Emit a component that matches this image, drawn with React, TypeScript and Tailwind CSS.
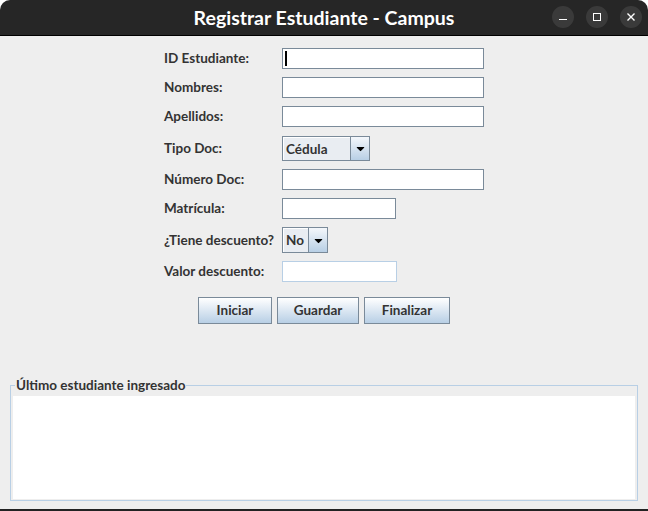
import { FaCaretDown } from "react-icons/fa";

const label = "w-[118px] shrink-0 text-[13.5px] font-bold text-[#333333]";
const field = "h-[21px] border border-[#7a8a99] bg-white";

function Row({ text, h = "h-[21px]", children }: { text: string; h?: string; children: React.ReactNode }) {
  return (
    <div className={`flex items-center ${h}`}>
      <div className={label}>{text}</div>
      {children}
    </div>
  );
}

function Combo({ value, w, textW }: { value: string; w: string; textW: string }) {
  return (
    <div className={`flex h-full ${w} border border-[#7a8a99] bg-[#e9edf2]`}>
      <div className={`${textW} flex items-center border-t border-l border-white pl-[2px] text-[13.5px] font-bold text-[#333333]`}>
        {value}
      </div>
      <div className="flex flex-1 items-center justify-center border-l border-[#7a8a99] bg-gradient-to-b from-[#f4f7fb] to-[#b8cfe5]">
        <FaCaretDown className="text-[13px] text-black" />
      </div>
    </div>
  );
}

function WinButton({ children }: { children: React.ReactNode }) {
  return (
    <div className="flex h-[22px] w-[22px] items-center justify-center rounded-full bg-[#3a3a3a]">{children}</div>
  );
}

function Button({ text, w }: { text: string; w: string }) {
  return (
    <button className={`${w} h-[27px] border border-[#7a8a99] bg-gradient-to-b from-white to-[#b8cfe5] text-[13.5px] font-bold text-[#333333]`}>
      {text}
    </button>
  );
}

export default function App() {
  return (
    <div className="flex h-[511px] w-[648px] flex-col overflow-hidden rounded-t-[10px] bg-[#eeeeee] font-['Lato',sans-serif]">
      <div className="relative flex h-[36px] shrink-0 items-center justify-center border-b border-black bg-[#262626]">
        <div className="text-[19.5px] font-bold text-white">Registrar Estudiante - Campus</div>
        <div className="absolute right-[6px] top-[6px] flex gap-[12px]">
          <WinButton>
            <div className="mt-[5px] h-[1.5px] w-[8px] bg-white" />
          </WinButton>
          <WinButton>
            <div className="h-[8px] w-[8px] border border-white" />
          </WinButton>
          <WinButton>
            <svg width="10" height="10" viewBox="0 0 10 10" stroke="white" strokeWidth="1.4">
              <path d="M1.5 1.5 L8.5 8.5 M8.5 1.5 L1.5 8.5" />
            </svg>
          </WinButton>
        </div>
      </div>

      <div className="flex flex-1 flex-col border-b-2 border-[#222222]">
        <div className="mx-auto mt-[12px] flex w-[320px] flex-col">
          <Row text="ID Estudiante:">
            <div className={`${field} w-[202px] pl-[2px] pt-[2px]`}>
              <div className="h-[15px] w-[2px] bg-black" />
            </div>
          </Row>
          <div className="mt-[8px]">
            <Row text="Nombres:">
              <div className={`${field} w-[202px]`} />
            </Row>
          </div>
          <div className="mt-[8px]">
            <Row text="Apellidos:">
              <div className={`${field} w-[202px]`} />
            </Row>
          </div>
          <div className="mt-[9px]">
            <Row text="Tipo Doc:" h="h-[25px]">
              <Combo value="Cédula" w="w-[88px]" textW="w-[67px]" />
            </Row>
          </div>
          <div className="mt-[8px]">
            <Row text="Número Doc:">
              <div className={`${field} w-[202px]`} />
            </Row>
          </div>
          <div className="mt-[8px]">
            <Row text="Matrícula:">
              <div className={`${field} w-[114px]`} />
            </Row>
          </div>
          <div className="mt-[8px]">
            <Row text="¿Tiene descuento?" h="h-[26px]">
              <Combo value="No" w="w-[46px]" textW="w-[25px]" />
            </Row>
          </div>
          <div className="mt-[8px]">
            <Row text="Valor descuento:">
              <div className="h-[21px] w-[115px] border border-[#b8cfe5] bg-white" />
            </Row>
          </div>
        </div>

        <div className="mt-[15px] flex justify-center gap-[5px]">
          <Button text="Iniciar" w="w-[74px]" />
          <Button text="Guardar" w="w-[82px]" />
          <Button text="Finalizar" w="w-[86px]" />
        </div>

        <fieldset className="mx-[10px] mt-[54px] border border-[#b8cfe5] px-[2px] pb-[1px]">
          <legend className="ml-[2px] px-[1px] text-[13.5px] font-bold leading-[14px] text-[#333333]">
            Último estudiante ingresado
          </legend>
          <div className="mt-[4px] h-[103px] bg-white" />
        </fieldset>
      </div>
    </div>
  );
}
